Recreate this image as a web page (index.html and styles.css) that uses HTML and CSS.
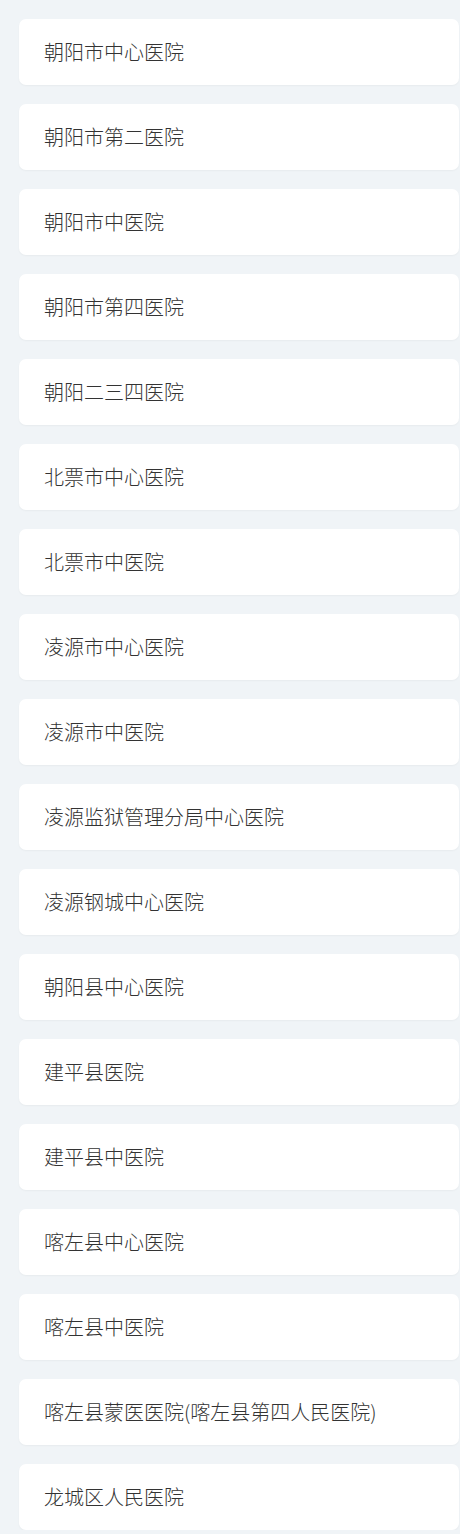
FILE: index.html
```html
<!DOCTYPE html>
<html lang="zh-CN">
<head>
<meta charset="utf-8">
<title>医院列表</title>
<link rel="stylesheet" href="styles.css">
</head>
<body>
<ul class="list">
  <li class="item">朝阳市中心医院</li>
  <li class="item">朝阳市第二医院</li>
  <li class="item">朝阳市中医院</li>
  <li class="item">朝阳市第四医院</li>
  <li class="item">朝阳二三四医院</li>
  <li class="item">北票市中心医院</li>
  <li class="item">北票市中医院</li>
  <li class="item">凌源市中心医院</li>
  <li class="item">凌源市中医院</li>
  <li class="item">凌源监狱管理分局中心医院</li>
  <li class="item">凌源钢城中心医院</li>
  <li class="item">朝阳县中心医院</li>
  <li class="item">建平县医院</li>
  <li class="item">建平县中医院</li>
  <li class="item">喀左县中心医院</li>
  <li class="item">喀左县中医院</li>
  <li class="item">喀左县蒙医医院(喀左县第四人民医院)</li>
  <li class="item">龙城区人民医院</li>
</ul>
</body>
</html>
```

FILE: styles.css
```css
html, body {
  margin: 0;
  padding: 0;
  background: #f0f4f7;
}
body {
  font-family: "Noto Sans CJK SC", "Noto Sans", sans-serif;
  color: #333333;
}
.list {
  list-style: none;
  margin: 0;
  padding: 19px 1px 0 19px;
  display: flex;
  flex-direction: column;
  gap: 19px;
}
.item {
  height: 66px;
  box-sizing: border-box;
  padding-left: 25px;
  display: flex;
  align-items: center;
  background: #ffffff;
  border-radius: 7px;
  box-shadow: 0 1px 2px rgba(0, 0, 0, 0.04);
  font-size: 20px;
  font-weight: 300;
  line-height: 1;
}
```
